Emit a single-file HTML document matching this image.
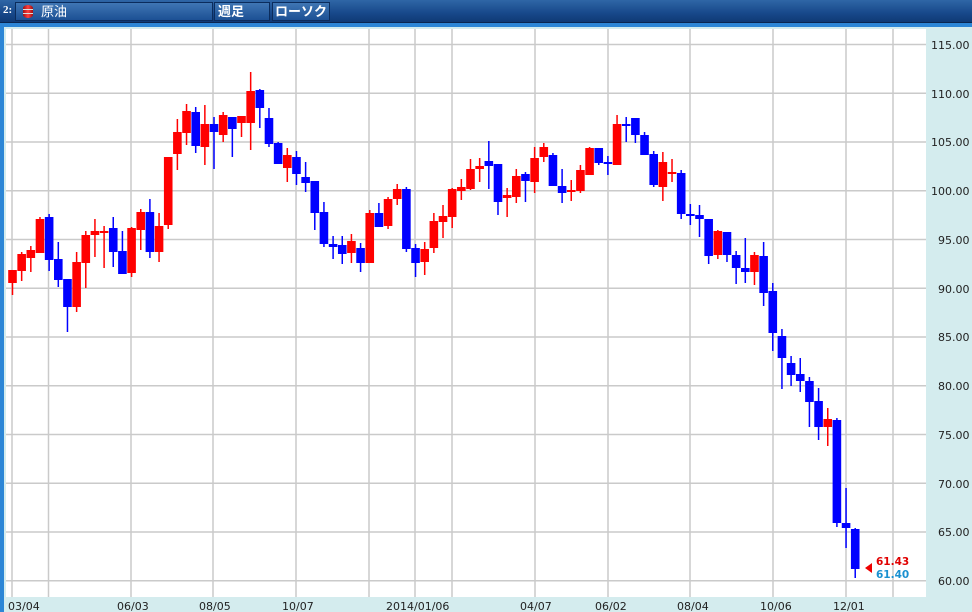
<!DOCTYPE html>
<html><head><meta charset="utf-8"><style>
*{margin:0;padding:0;box-sizing:border-box}
body{width:972px;height:612px;overflow:hidden;background:#d4ecee;position:relative;font-family:"Liberation Sans","Noto Sans CJK JP",sans-serif}
#bar{position:absolute;left:0;top:0;width:972px;height:23px;background:linear-gradient(#2f66a6,#17488a 60%,#0f3a75);border-bottom:1px solid #0a2650}
#strip{position:absolute;left:0;top:23px;width:972px;height:4px;background:#2c86d6}
#lstrip{position:absolute;left:0;top:23px;width:4px;height:589px;background:#2c86d6}
.box{position:absolute;top:2px;height:19px;border:1px solid #0b2c5c;background:linear-gradient(#3f76b4,#1c5094);color:#fff;font-size:13px;line-height:17px}
svg{position:absolute;left:0;top:0}
.r{fill:#ff0000;stroke:#ff0000}.b{fill:#0000ff;stroke:#0000ff}
svg rect{stroke:none}
svg path.w{fill:none;stroke-width:1.5}
.ax{font-family:"DejaVu Sans",sans-serif;font-size:11px;fill:#222}
</style></head><body>
<div id="bar"></div>
<div id="strip"></div><div id="lstrip"></div>
<div style="position:absolute;left:3px;top:4px;color:#fff;font-weight:bold;font-size:11px;font-family:'Liberation Serif',serif">2:</div>
<div class="box" style="left:15px;width:198px;"><span style="position:absolute;left:7px;top:2px;width:10px;height:13px;border-radius:5px/3px;background:linear-gradient(90deg,#a01010,#ff4040 50%,#a01010)"></span><span style="position:absolute;left:7px;top:6px;width:10px;height:1px;background:#ddd"></span><span style="position:absolute;left:7px;top:10px;width:10px;height:1px;background:#ddd"></span><span style="position:absolute;left:25px;top:0">原油</span></div>
<div class="box" style="left:214px;width:56px;font-weight:bold;padding-left:3px">週足</div>
<div class="box" style="left:272px;width:58px;font-weight:bold;padding-left:2px">ローソク</div>
<svg width="972" height="612" viewBox="0 0 972 612">
<rect x="6" y="29" width="920" height="568" fill="#fff"/>
<g stroke="#cacaca" stroke-width="1.5">
<path d="M6 44.5H926M6 93.25H926M6 142H926M6 190.75H926M6 239.5H926M6 288.25H926M6 337H926M6 385.75H926M6 434.5H926M6 483.25H926M6 532H926M6 580.75H926"/>
<path d="M12 29V597M48.5 29V597M131 29V597M213 29V597M296 29V597M369 29V597M415 29V597M452 29V597M535 29V597M608 29V597M690 29V597M773 29V597M846 29V597M893 29V597"/>
</g>
<g class="ax">
<text x="931" y="49">115.00</text><text x="931" y="98">110.00</text><text x="931" y="146">105.00</text><text x="931" y="195">100.00</text><text x="938" y="244">95.00</text><text x="938" y="293">90.00</text><text x="938" y="341">85.00</text><text x="938" y="390">80.00</text><text x="938" y="439">75.00</text><text x="938" y="488">70.00</text><text x="938" y="536">65.00</text><text x="938" y="585">60.00</text>
<text x="8" y="610">03/04</text><text x="117" y="610">06/03</text><text x="199" y="610">08/05</text><text x="282" y="610">10/07</text><text x="386" y="610">2014/01/06</text><text x="520" y="610">04/07</text><text x="595" y="610">06/02</text><text x="677" y="610">08/04</text><text x="760" y="610">10/06</text><text x="833" y="610">12/01</text>
</g>
<path d="M865 568L872 563V573Z" fill="#ee0000"/>
<text x="876" y="565" font-family="DejaVu Sans,sans-serif" font-size="10.5" font-weight="bold" fill="#e00000">61.43</text>
<text x="876" y="578" font-family="DejaVu Sans,sans-serif" font-size="10.5" font-weight="bold" fill="#1a90d0">61.40</text>
<g>
<g class="r"><path class="w" d="M12.5 270V295"/><rect x="8.2" y="270" width="8.6" height="13"/>
<g transform="translate(9.16)" class="r"><path class="w" d="M12.5 252V281"/><rect x="8.2" y="254" width="8.6" height="17"/>
<g transform="translate(9.16)" class="r"><path class="w" d="M12.5 246V272"/><rect x="8.2" y="250" width="8.6" height="8"/>
<g transform="translate(9.16)" class="r"><path class="w" d="M12.5 217V253"/><rect x="8.2" y="219" width="8.6" height="34"/>
<g transform="translate(9.16)" class="b"><path class="w" d="M12.5 214V271"/><rect x="8.2" y="217" width="8.6" height="43"/>
<g transform="translate(9.16)" class="b"><path class="w" d="M12.5 242V287"/><rect x="8.2" y="259" width="8.6" height="21"/>
<g transform="translate(9.16)" class="b"><path class="w" d="M12.5 279V332"/><rect x="8.2" y="279" width="8.6" height="28"/>
<g transform="translate(9.16)" class="r"><path class="w" d="M12.5 252V312"/><rect x="8.2" y="262" width="8.6" height="45"/>
<g transform="translate(9.16)" class="r"><path class="w" d="M12.5 231V288"/><rect x="8.2" y="235" width="8.6" height="28"/>
<g transform="translate(9.16)" class="r"><path class="w" d="M12.5 219V257"/><rect x="8.2" y="231" width="8.6" height="4"/>
<g transform="translate(9.16)" class="r"><path class="w" d="M12.5 226V268"/><rect x="8.2" y="231" width="8.6" height="2"/>
<g transform="translate(9.16)" class="b"><path class="w" d="M12.5 217V267"/><rect x="8.2" y="228" width="8.6" height="24"/>
<g transform="translate(9.16)" class="b"><path class="w" d="M12.5 231V274"/><rect x="8.2" y="251" width="8.6" height="23"/>
<g transform="translate(9.16)" class="r"><path class="w" d="M12.5 227V277"/><rect x="8.2" y="228" width="8.6" height="45"/>
<g transform="translate(9.16)" class="r"><path class="w" d="M12.5 209V250"/><rect x="8.2" y="212" width="8.6" height="18"/>
<g transform="translate(9.16)" class="b"><path class="w" d="M12.5 199V258"/><rect x="8.2" y="212" width="8.6" height="40"/>
<g transform="translate(9.16)" class="r"><path class="w" d="M12.5 213V262"/><rect x="8.2" y="226" width="8.6" height="26"/>
<g transform="translate(9.16)" class="r"><path class="w" d="M12.5 157V229"/><rect x="8.2" y="157" width="8.6" height="68"/>
<g transform="translate(9.16)" class="r"><path class="w" d="M12.5 119V170"/><rect x="8.2" y="132" width="8.6" height="22"/>
<g transform="translate(9.16)" class="r"><path class="w" d="M12.5 104V145"/><rect x="8.2" y="111" width="8.6" height="22"/>
<g transform="translate(9.16)" class="b"><path class="w" d="M12.5 107V153"/><rect x="8.2" y="112" width="8.6" height="34"/>
<g transform="translate(9.16)" class="r"><path class="w" d="M12.5 105V165"/><rect x="8.2" y="124" width="8.6" height="23"/>
<g transform="translate(9.16)" class="b"><path class="w" d="M12.5 117V169"/><rect x="8.2" y="124" width="8.6" height="8"/>
<g transform="translate(9.16)" class="r"><path class="w" d="M12.5 112V142"/><rect x="8.2" y="115" width="8.6" height="20"/>
<g transform="translate(9.16)" class="b"><path class="w" d="M12.5 117V157"/><rect x="8.2" y="117" width="8.6" height="12"/>
<g transform="translate(9.16)" class="r"><path class="w" d="M12.5 116V137"/><rect x="8.2" y="116" width="8.6" height="7"/>
<g transform="translate(9.16)" class="r"><path class="w" d="M12.5 72V150"/><rect x="8.2" y="91" width="8.6" height="32"/>
<g transform="translate(9.16)" class="b"><path class="w" d="M12.5 89V128"/><rect x="8.2" y="90" width="8.6" height="18"/>
<g transform="translate(9.16)" class="b"><path class="w" d="M12.5 108V147"/><rect x="8.2" y="118" width="8.6" height="26"/>
<g transform="translate(9.16)" class="b"><path class="w" d="M12.5 142V164"/><rect x="8.2" y="143" width="8.6" height="21"/>
<g transform="translate(9.16)" class="r"><path class="w" d="M12.5 148V182"/><rect x="8.2" y="155" width="8.6" height="13"/>
<g transform="translate(9.16)" class="b"><path class="w" d="M12.5 151V185"/><rect x="8.2" y="157" width="8.6" height="17"/>
<g transform="translate(9.16)" class="b"><path class="w" d="M12.5 162V192"/><rect x="8.2" y="177" width="8.6" height="6"/>
<g transform="translate(9.16)" class="b"><path class="w" d="M12.5 181V230"/><rect x="8.2" y="181" width="8.6" height="32"/>
<g transform="translate(9.16)" class="b"><path class="w" d="M12.5 202V247"/><rect x="8.2" y="212" width="8.6" height="32"/>
<g transform="translate(9.16)" class="b"><path class="w" d="M12.5 236V259"/><rect x="8.2" y="244" width="8.6" height="3"/>
<g transform="translate(9.16)" class="b"><path class="w" d="M12.5 236V264"/><rect x="8.2" y="245" width="8.6" height="9"/>
<g transform="translate(9.16)" class="r"><path class="w" d="M12.5 234V263"/><rect x="8.2" y="241" width="8.6" height="12"/>
<g transform="translate(9.16)" class="b"><path class="w" d="M12.5 243V272"/><rect x="8.2" y="248" width="8.6" height="15"/>
<g transform="translate(9.16)" class="r"><path class="w" d="M12.5 210V263"/><rect x="8.2" y="213" width="8.6" height="50"/>
<g transform="translate(9.16)" class="b"><path class="w" d="M12.5 203V227"/><rect x="8.2" y="213" width="8.6" height="14"/>
<g transform="translate(9.16)" class="r"><path class="w" d="M12.5 197V229"/><rect x="8.2" y="199" width="8.6" height="27"/>
<g transform="translate(9.16)" class="r"><path class="w" d="M12.5 184V205"/><rect x="8.2" y="189" width="8.6" height="10"/>
<g transform="translate(9.16)" class="b"><path class="w" d="M12.5 187V252"/><rect x="8.2" y="189" width="8.6" height="60"/>
<g transform="translate(9.16)" class="b"><path class="w" d="M12.5 244V277"/><rect x="8.2" y="248" width="8.6" height="15"/>
<g transform="translate(9.16)" class="r"><path class="w" d="M12.5 242V275"/><rect x="8.2" y="249" width="8.6" height="13"/>
<g transform="translate(9.16)" class="r"><path class="w" d="M12.5 213V253"/><rect x="8.2" y="221" width="8.6" height="27"/>
<g transform="translate(9.16)" class="r"><path class="w" d="M12.5 205V238"/><rect x="8.2" y="216" width="8.6" height="6"/>
<g transform="translate(9.16)" class="r"><path class="w" d="M12.5 188V228"/><rect x="8.2" y="189" width="8.6" height="28"/>
<g transform="translate(9.16)" class="r"><path class="w" d="M12.5 179V200"/><rect x="8.2" y="187" width="8.6" height="4"/>
<g transform="translate(9.16)" class="r"><path class="w" d="M12.5 159V190"/><rect x="8.2" y="169" width="8.6" height="20"/>
<g transform="translate(9.16)" class="r"><path class="w" d="M12.5 158V182"/><rect x="8.2" y="166" width="8.6" height="3"/>
<g transform="translate(9.16)" class="b"><path class="w" d="M12.5 141V189"/><rect x="8.2" y="161" width="8.6" height="5"/>
<g transform="translate(9.16)" class="b"><path class="w" d="M12.5 164V215"/><rect x="8.2" y="164" width="8.6" height="38"/>
<g transform="translate(9.16)" class="r"><path class="w" d="M12.5 188V217"/><rect x="8.2" y="195" width="8.6" height="3"/>
<g transform="translate(9.16)" class="r"><path class="w" d="M12.5 169V203"/><rect x="8.2" y="176" width="8.6" height="21"/>
<g transform="translate(9.16)" class="b"><path class="w" d="M12.5 172V202"/><rect x="8.2" y="174" width="8.6" height="7"/>
<g transform="translate(9.16)" class="r"><path class="w" d="M12.5 147V193"/><rect x="8.2" y="158" width="8.6" height="24"/>
<g transform="translate(9.16)" class="r"><path class="w" d="M12.5 143V162"/><rect x="8.2" y="147" width="8.6" height="10"/>
<g transform="translate(9.16)" class="b"><path class="w" d="M12.5 153V186"/><rect x="8.2" y="155" width="8.6" height="31"/>
<g transform="translate(9.16)" class="b"><path class="w" d="M12.5 169V203"/><rect x="8.2" y="186" width="8.6" height="7"/>
<g transform="translate(9.16)" class="r"><path class="w" d="M12.5 180V201"/><rect x="8.2" y="190" width="8.6" height="2"/>
<g transform="translate(9.16)" class="r"><path class="w" d="M12.5 165V193"/><rect x="8.2" y="170" width="8.6" height="21"/>
<g transform="translate(9.16)" class="r"><path class="w" d="M12.5 147V175"/><rect x="8.2" y="148" width="8.6" height="27"/>
<g transform="translate(9.16)" class="b"><path class="w" d="M12.5 148V165"/><rect x="8.2" y="148" width="8.6" height="15"/>
<g transform="translate(9.16)" class="b"><path class="w" d="M12.5 156V175"/><rect x="8.2" y="162" width="8.6" height="2"/>
<g transform="translate(9.16)" class="r"><path class="w" d="M12.5 115V165"/><rect x="8.2" y="124" width="8.6" height="41"/>
<g transform="translate(9.16)" class="b"><path class="w" d="M12.5 117V142"/><rect x="8.2" y="124" width="8.6" height="2"/>
<g transform="translate(9.16)" class="b"><path class="w" d="M12.5 118V143"/><rect x="8.2" y="118" width="8.6" height="17"/>
<g transform="translate(9.16)" class="b"><path class="w" d="M12.5 132V155"/><rect x="8.2" y="135" width="8.6" height="20"/>
<g transform="translate(9.16)" class="b"><path class="w" d="M12.5 151V187"/><rect x="8.2" y="154" width="8.6" height="31"/>
<g transform="translate(9.16)" class="r"><path class="w" d="M12.5 152V201"/><rect x="8.2" y="162" width="8.6" height="25"/>
<g transform="translate(9.16)" class="r"><path class="w" d="M12.5 159V182"/><rect x="8.2" y="172" width="8.6" height="2"/>
<g transform="translate(9.16)" class="b"><path class="w" d="M12.5 170V219"/><rect x="8.2" y="173" width="8.6" height="41"/>
<g transform="translate(9.16)" class="b"><path class="w" d="M12.5 204V225"/><rect x="8.2" y="214" width="8.6" height="2"/>
<g transform="translate(9.16)" class="b"><path class="w" d="M12.5 205V237"/><rect x="8.2" y="215" width="8.6" height="4"/>
<g transform="translate(9.16)" class="b"><path class="w" d="M12.5 219V264"/><rect x="8.2" y="219" width="8.6" height="37"/>
<g transform="translate(9.16)" class="r"><path class="w" d="M12.5 230V259"/><rect x="8.2" y="231" width="8.6" height="24"/>
<g transform="translate(9.16)" class="b"><path class="w" d="M12.5 232V262"/><rect x="8.2" y="232" width="8.6" height="23"/>
<g transform="translate(9.16)" class="b"><path class="w" d="M12.5 251V284"/><rect x="8.2" y="255" width="8.6" height="13"/>
<g transform="translate(9.16)" class="b"><path class="w" d="M12.5 238V283"/><rect x="8.2" y="268" width="8.6" height="4"/>
<g transform="translate(9.16)" class="r"><path class="w" d="M12.5 252V285"/><rect x="8.2" y="255" width="8.6" height="17"/>
<g transform="translate(9.16)" class="b"><path class="w" d="M12.5 242V306"/><rect x="8.2" y="256" width="8.6" height="37"/>
<g transform="translate(9.16)" class="b"><path class="w" d="M12.5 283V351"/><rect x="8.2" y="291" width="8.6" height="42"/>
<g transform="translate(9.16)" class="b"><path class="w" d="M12.5 329V389"/><rect x="8.2" y="336" width="8.6" height="22"/>
<g transform="translate(9.16)" class="b"><path class="w" d="M12.5 356V386"/><rect x="8.2" y="363" width="8.6" height="12"/>
<g transform="translate(9.16)" class="b"><path class="w" d="M12.5 358V392"/><rect x="8.2" y="374" width="8.6" height="7"/>
<g transform="translate(9.16)" class="b"><path class="w" d="M12.5 377V427"/><rect x="8.2" y="381" width="8.6" height="21"/>
<g transform="translate(9.16)" class="b"><path class="w" d="M12.5 388V440"/><rect x="8.2" y="401" width="8.6" height="26"/>
<g transform="translate(9.16)" class="r"><path class="w" d="M12.5 408V446"/><rect x="8.2" y="419" width="8.6" height="8"/>
<g transform="translate(9.16)" class="b"><path class="w" d="M12.5 418V527"/><rect x="8.2" y="420" width="8.6" height="103"/>
<g transform="translate(9.16)" class="b"><path class="w" d="M12.5 488V548"/><rect x="8.2" y="523" width="8.6" height="5"/>
<g transform="translate(9.16)" class="b"><path class="w" d="M12.5 528V578"/><rect x="8.2" y="529" width="8.6" height="40"/>
</g></g></g></g></g></g></g></g></g></g></g></g></g></g></g></g></g></g></g></g></g></g></g></g></g></g></g></g></g></g></g></g></g></g></g></g></g></g></g></g></g></g></g></g></g></g></g></g></g></g></g></g></g></g></g></g></g></g></g></g></g></g></g></g></g></g></g></g></g></g></g></g></g></g></g></g></g></g></g></g></g></g></g></g></g></g></g></g></g></g></g></g></g>
</g>
</svg>
</body></html>
